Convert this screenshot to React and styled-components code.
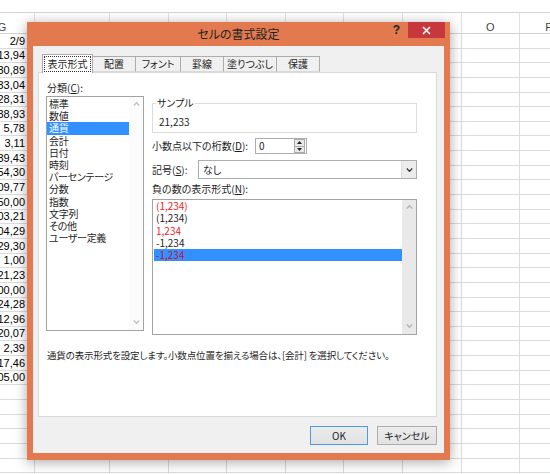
import React from "react";
import styled, { createGlobalStyle } from "styled-components";

const GlobalStyle = createGlobalStyle`
  html, body {
    margin: 0;
    padding: 0;
    background: #fff;
  }
`;

const Screen = styled.div`
  position: relative;
  width: 550px;
  height: 474px;
  overflow: hidden;
  background: #fff;
`;

// ---- spreadsheet behind the dialog ----
const Sheet = styled.div`
  margin-left: -30px;
  font-family: "Liberation Sans", Arial, sans-serif;
  font-size: 11px;
  color: #000;
`;

const FormulaGap = styled.div`
  height: 12px;
  border-bottom: 1px solid #d4d4d4;
`;

const SheetRow = styled.div`
  display: grid;
  grid-template-columns: 65px 75px repeat(8, 58.6px);
  height: ${(p) => (p.$header ? "21px" : "14.65px")};
  box-sizing: border-box;
  border-bottom: 1px solid ${(p) => (p.$header ? "#d4d4d4" : "#dadcdd")};
`;

const HeadCell = styled.div`
  display: flex;
  align-items: flex-end;
  justify-content: center;
  line-height: 11px;
  color: #444;
  font-size: 11px;
  border-right: 1px solid #e1e1e1;
`;

const Cell = styled.div`
  display: flex;
  align-items: flex-end;
  justify-content: flex-end;
  padding-right: ${(p) => (p.$num ? "9px" : "0")};
  line-height: 13px;
  border-right: 1px solid #dadcdd;
  white-space: nowrap;
  overflow: hidden;
`;

// ---- dialog window ----
const Dialog = styled.div`
  position: absolute;
  left: 27px;
  top: 22px;
  width: 423px;
  height: 438px;
  box-sizing: border-box;
  padding: 0 6px 7px 6px;
  background: #e37a4f;
  box-shadow: 0 2px 12px rgba(0, 0, 0, 0.35);
  display: flex;
  flex-direction: column;
  font-family: "Noto Sans CJK JP", "Noto Sans", sans-serif;
  font-feature-settings: "palt";
  color: #1e1e1e;
`;

const TitleBar = styled.div`
  height: 24px;
  display: grid;
  grid-template-columns: 1fr auto 1fr;
  align-items: start;
`;

const Title = styled.div`
  grid-column: 2;
  font-size: 12px;
  line-height: 24px;
  color: #222;
`;

const Controls = styled.div`
  display: flex;
  justify-content: flex-end;
  align-items: flex-start;
  margin-right: -1px;
`;

const Help = styled.span`
  font-family: "Liberation Sans", Arial, sans-serif;
  font-weight: bold;
  font-size: 12px;
  line-height: 16px;
  color: #222;
  margin-right: 8px;
`;

const CloseButton = styled.div`
  width: 37px;
  height: 16px;
  background: #c7383c;
  display: flex;
  align-items: center;
  justify-content: center;
`;

const Client = styled.div`
  flex: 1;
  background: #f0f0f0;
  padding: 8px 7px 8px 5px;
  display: flex;
  flex-direction: column;
`;

const TabStrip = styled.div`
  display: flex;
  align-items: flex-end;
  height: 18px;
  padding-left: 4px;
  position: relative;
  z-index: 1;
`;

const Tab = styled.div`
  width: ${(p) => p.$w}px;
  height: ${(p) => (p.$active ? "19px" : "16px")};
  margin-bottom: ${(p) => (p.$active ? "-1px" : "0")};
  box-sizing: border-box;
  border: 1px solid #acacac;
  border-bottom: ${(p) => (p.$active ? "none" : "1px solid #d9d9d9")};
  border-left: ${(p) => (p.$first || p.$active ? "1px solid #acacac" : "none")};
  background: ${(p) => (p.$active ? "#fff" : "#f0f0f0")};
  font-size: 10px;
  line-height: 14px;
  display: flex;
  justify-content: center;
  align-items: ${(p) => (p.$active ? "flex-start" : "center")};
  padding: ${(p) => (p.$active ? "1px" : "0")};
`;

const FocusRect = styled.span`
  flex: 1;
  text-align: center;
  border: 1px dotted #333;
  line-height: 14px;
`;

const Panel = styled.div`
  height: 345px;
  box-sizing: border-box;
  background: #fff;
  border: 1px solid #d9d9d9;
  padding: 8px 19px 0 7px;
`;

const Columns = styled.div`
  display: grid;
  grid-template-columns: 98px 265px;
  column-gap: 8px;
`;

const Label = styled.div`
  font-size: 10px;
  line-height: 14px;
  white-space: nowrap;
  padding-left: ${(p) => p.$indent || 0}px;
  margin-top: ${(p) => p.$mt || 0}px;
  flex: ${(p) => (p.$w ? `0 0 ${p.$w}px` : "none")};

  u {
    text-decoration: underline;
    text-underline-offset: 1px;
  }
`;

const LeftColumn = styled.div`
  display: flex;
  flex-direction: column;
`;

const RightColumn = styled.div`
  display: flex;
  flex-direction: column;
  padding-top: 15px;
`;

const ListBox = styled.div`
  height: ${(p) => p.$h}px;
  margin-top: ${(p) => p.$mt || 0}px;
  box-sizing: border-box;
  border: 1px solid #a3a3a3;
  background: #fff;
  display: grid;
  grid-template-columns: 1fr 14px;
`;

const Items = styled.div`
  padding-top: ${(p) => p.$pt || 0}px;
  padding-left: ${(p) => p.$pl || 0}px;
`;

const Item = styled.div`
  height: ${(p) => p.$h}px;
  line-height: ${(p) => p.$h}px;
  font-size: ${(p) => p.$fs}px;
  letter-spacing: ${(p) => p.$ls || 0}px;
  padding-left: 2px;
  white-space: nowrap;
  background: ${(p) => (p.$selected ? "#3391ff" : "transparent")};
  color: ${(p) => (p.$selected ? p.$selColor || "#fff" : p.$color || "#1e1e1e")};
`;

const ScrollTrack = styled.div`
  background: ${(p) => p.$bg};
  display: flex;
  flex-direction: column;
  justify-content: space-between;
  align-items: center;
  padding: 5px 0 6px;
`;

const Group = styled.fieldset`
  margin: 0;
  padding: 5px 6px 3px;
  border: 1px solid #dcdcdc;
  min-width: 0;

  legend {
    font-size: 10px;
    line-height: 14px;
    padding: 0 1px;
    margin-left: -3px;
  }
`;

const SampleValue = styled.div`
  font-size: 10px;
  line-height: 14px;
`;

const FieldRow = styled.div`
  display: flex;
  align-items: center;
  margin-top: ${(p) => p.$mt}px;
`;

const SpinBox = styled.div`
  width: 52px;
  height: 16px;
  box-sizing: border-box;
  border: 1px solid #abadb3;
  background: #fff;
  display: flex;
`;

const SpinValue = styled.div`
  flex: 1;
  padding-left: 3px;
  font-size: 10px;
  line-height: 14px;
`;

const SpinButtons = styled.div`
  width: 11px;
  margin: 0 1px 0 0;
  display: flex;
  flex-direction: column;
`;

const SpinHalf = styled.div`
  flex: 1;
  background: #e8e8e8;
  border: 1px solid #acacac;
  border-top: ${(p) => (p.$lower ? "none" : "1px solid #acacac")};
  display: flex;
  align-items: center;
  justify-content: center;
`;

const Combo = styled.div`
  width: 219px;
  height: 19px;
  box-sizing: border-box;
  border: 1px solid #abadb3;
  background: #fff;
  display: flex;
`;

const ComboValue = styled.div`
  flex: 1;
  padding-left: 4px;
  font-size: 10px;
  line-height: 17px;
`;

const ComboButton = styled.div`
  width: 14px;
  background: #ececec;
  border-left: 1px solid #dcdcdc;
  display: flex;
  align-items: center;
  justify-content: center;
`;

const Description = styled.div`
  margin-top: 13px;
  padding-left: 1px;
  font-size: 9.5px;
  letter-spacing: -0.15px;
  line-height: 14px;
  white-space: nowrap;
`;

const ButtonRow = styled.div`
  margin-top: 9px;
  display: flex;
  justify-content: flex-end;
  gap: 9px;
`;

const Button = styled.div`
  width: ${(p) => p.$w}px;
  height: 19px;
  box-sizing: border-box;
  border: 1px solid ${(p) => (p.$default ? "#4d9be8" : "#adadad")};
  background: linear-gradient(#ececec, #e2e2e2);
  font-size: 10px;
  line-height: 17px;
  text-align: center;
`;

const Chevron = ({ up, color = "#c2c2c2", w = 7, h = 4, sw = 1.3 }) => (
  <svg width={w} height={h} viewBox="0 0 10 6">
    <polyline
      points={up ? "1,5.2 5,1 9,5.2" : "1,0.8 5,5 9,0.8"}
      fill="none"
      stroke={color}
      strokeWidth={sw * 1.6}
    />
  </svg>
);

const Triangle = ({ up }) => (
  <svg width="5" height="3" viewBox="0 0 5 3">
    <polygon points={up ? "0,3 2.5,0 5,3" : "0,0 2.5,3 5,0"} fill="#222" />
  </svg>
);

const sheetValues = [
  "2/9", "13,94", "30,89", "33,04", "28,31", "38,93", "5,78", "3,11",
  "39,43", "54,30", "09,77", "50,00", "03,21", "04,29", "29,30", "1,00",
  "21,23", "00,00", "24,28", "12,96", "20,07", "2,39", "17,46", "05,00",
];

const columns = ["G", "H", "I", "J", "K", "L", "M", "N", "O", "P"];

const categories = [
  "標準", "数値", "通貨", "会計", "日付", "時刻", "パーセンテージ",
  "分数", "指数", "文字列", "その他", "ユーザー定義",
];

const negatives = [
  { text: "(1,234)", color: "#f21b1b" },
  { text: "(1,234)" },
  { text: "1,234", color: "#f21b1b" },
  { text: "-1,234" },
  { text: "-1,234", selected: true },
];

const tabs = [
  { label: "表示形式", w: 51, active: true },
  { label: "配置", w: 43 },
  { label: "フォント", w: 45 },
  { label: "罫線", w: 43 },
  { label: "塗りつぶし", w: 53 },
  { label: "保護", w: 43 },
];

function SpreadSheet() {
  const rows = Array.from({ length: 31 }, (_, i) => sheetValues[i] || "");
  return (
    <Sheet>
      <FormulaGap />
      <SheetRow $header>
        {columns.map((c) => (
          <HeadCell key={c}>{c}</HeadCell>
        ))}
      </SheetRow>
      {rows.map((v, i) => (
        <SheetRow key={i}>
          {columns.map((c, j) => (
            <Cell key={c} $num={j === 0}>
              {j === 0 ? v : ""}
            </Cell>
          ))}
        </SheetRow>
      ))}
    </Sheet>
  );
}

export default function App() {
  return (
    <Screen>
      <GlobalStyle />
      <SpreadSheet />
      <Dialog>
        <TitleBar>
          <Title>セルの書式設定</Title>
          <Controls>
            <Help>?</Help>
            <CloseButton>
              <svg width="9" height="9" viewBox="0 0 9 9">
                <path d="M1 1 L8 8 M8 1 L1 8" stroke="#fff" strokeWidth="1.6" />
              </svg>
            </CloseButton>
          </Controls>
        </TitleBar>
        <Client>
          <TabStrip>
            {tabs.map((t, i) => (
              <Tab key={t.label} $w={t.w} $active={t.active} $first={i === 0}>
                {t.active ? <FocusRect>{t.label}</FocusRect> : t.label}
              </Tab>
            ))}
          </TabStrip>
          <Panel>
            <Columns>
              <LeftColumn>
                <Label $indent={1}>
                  分類(<u>C</u>):
                </Label>
                <ListBox $h={235} $mt={1}>
                  <Items $pt={1}>
                    {categories.map((c) => (
                      <Item
                        key={c}
                        $h={12.2}
                        $fs={10}
                        $ls={-0.3}
                        $selected={c === "通貨"}
                      >
                        {c}
                      </Item>
                    ))}
                  </Items>
                  <ScrollTrack $bg="#fbfbfb">
                    <Chevron up />
                    <Chevron />
                  </ScrollTrack>
                </ListBox>
              </LeftColumn>
              <RightColumn>
                <Group>
                  <legend>サンプル</legend>
                  <SampleValue>21,233</SampleValue>
                </Group>
                <FieldRow $mt={5}>
                  <Label $w={103}>
                    小数点以下の桁数(<u>D</u>):
                  </Label>
                  <SpinBox>
                    <SpinValue>0</SpinValue>
                    <SpinButtons>
                      <SpinHalf>
                        <Triangle up />
                      </SpinHalf>
                      <SpinHalf $lower>
                        <Triangle />
                      </SpinHalf>
                    </SpinButtons>
                  </SpinBox>
                </FieldRow>
                <FieldRow $mt={6}>
                  <Label $w={46}>
                    記号(<u>S</u>):
                  </Label>
                  <Combo>
                    <ComboValue>なし</ComboValue>
                    <ComboButton>
                      <Chevron color="#333" w={7} h={4} sw={1.2} />
                    </ComboButton>
                  </Combo>
                </FieldRow>
                <Label $mt={3}>
                  負の数の表示形式(<u>N</u>):
                </Label>
                <ListBox $h={136} $mt={3}>
                  <Items $pl={1}>
                    {negatives.map((n, i) => (
                      <Item
                        key={i}
                        $h={12.3}
                        $fs={10}
                        $color={n.color}
                        $selected={n.selected}
                        $selColor="#c8102e"
                      >
                        {n.text}
                      </Item>
                    ))}
                  </Items>
                  <ScrollTrack $bg="#e9e9e9">
                    <Chevron up color="#b5b5b5" />
                    <Chevron color="#b5b5b5" />
                  </ScrollTrack>
                </ListBox>
              </RightColumn>
            </Columns>
            <Description>
              通貨の表示形式を設定します。小数点位置を揃える場合は、[会計] を選択してください。
            </Description>
          </Panel>
          <ButtonRow>
            <Button $w={58} $default>
              OK
            </Button>
            <Button $w={60}>キャンセル</Button>
          </ButtonRow>
        </Client>
      </Dialog>
    </Screen>
  );
}
